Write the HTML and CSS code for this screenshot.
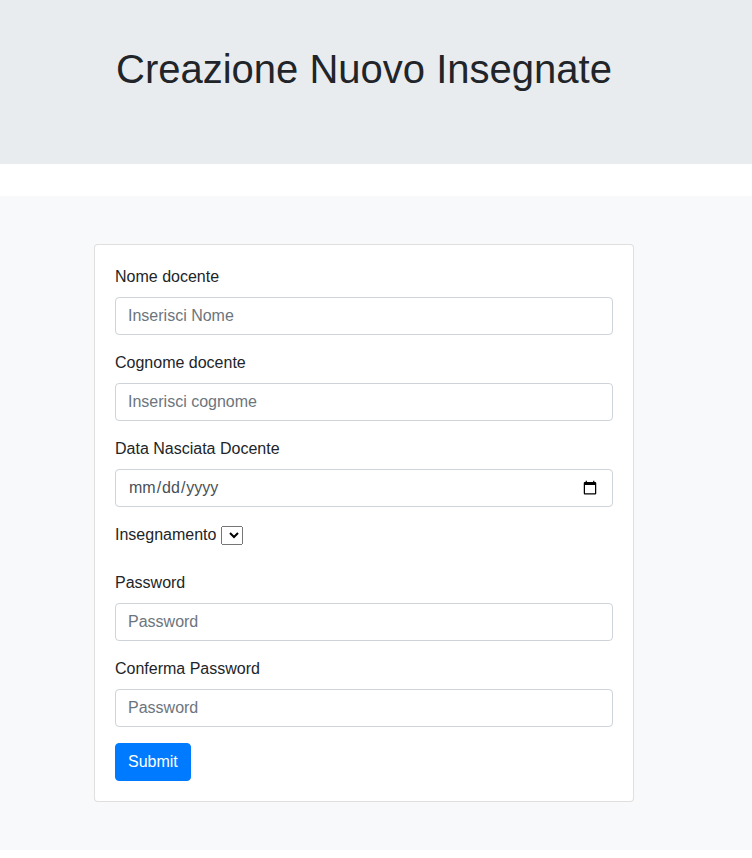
FILE: index.html
```html
<!DOCTYPE html>
<html lang="it">
<head>
<meta charset="utf-8">
<title>Creazione Nuovo Insegnate</title>
<link rel="stylesheet" href="styles.css">
</head>
<body>
<header class="jumbo">
  <h1 class="title">Creazione Nuovo Insegnate</h1>
</header>
<main class="section">
  <form class="card">
    <div class="group">
      <label class="label" for="nome">Nome docente</label>
      <input class="control" id="nome" type="text" placeholder="Inserisci Nome">
    </div>
    <div class="group">
      <label class="label" for="cognome">Cognome docente</label>
      <input class="control" id="cognome" type="text" placeholder="Inserisci cognome">
    </div>
    <div class="group">
      <label class="label" for="data">Data Nasciata Docente</label>
      <input class="control" id="data" type="date">
    </div>
    <div class="group">
      <label class="label" for="ins">Insegnamento</label>
      <select id="ins" class="select"></select>
    </div>
    <div class="group">
      <label class="label" for="pw">Password</label>
      <input class="control" id="pw" type="password" placeholder="Password">
    </div>
    <div class="group">
      <label class="label" for="pw2">Conferma Password</label>
      <input class="control" id="pw2" type="password" placeholder="Password">
    </div>
    <button class="btn" type="submit">Submit</button>
  </form>
</main>
</body>
</html>
```
FILE: styles.css
```css
html, body {
  margin: 0;
  padding: 0;
}
body {
  font-family: "Liberation Sans", Arial, sans-serif;
  font-size: 16px;
  line-height: 24px;
  color: #212529;
  background: #fff;
  padding-bottom: 8px;
}
.jumbo {
  box-sizing: border-box;
  height: 164px;
  background: #e9ecef;
  padding: 45px 0 0 116px;
  margin-bottom: 32px;
}
.title {
  margin: 0;
  font-size: 40px;
  line-height: 48px;
  font-weight: 500;
}
.section {
  background: #f8f9fa;
  padding: 48px 118px 48px 94px;
}
.card {
  display: block;
  margin: 0;
  background: #fff;
  border: 1px solid rgba(0, 0, 0, 0.125);
  border-radius: 4px;
  padding: 20px;
}
.group {
  margin-bottom: 16px;
}
.label {
  display: inline-block;
  margin-bottom: 8px;
}
.control {
  display: block;
  box-sizing: border-box;
  width: 100%;
  height: 38px;
  padding: 6px 12px;
  font-family: inherit;
  font-size: 16px;
  line-height: 24px;
  color: #495057;
  background: #fff;
  border: 1px solid #ced4da;
  border-radius: 4px;
  margin: 0;
}
.control::placeholder {
  color: #6c757d;
  opacity: 1;
}
.select {
  font-family: inherit;
  vertical-align: baseline;
}
.btn {
  display: inline-block;
  font-family: inherit;
  font-size: 16px;
  line-height: 24px;
  padding: 6px 12px;
  color: #fff;
  background: #007bff;
  border: 1px solid #007bff;
  border-radius: 4px;
  cursor: pointer;
}
```
